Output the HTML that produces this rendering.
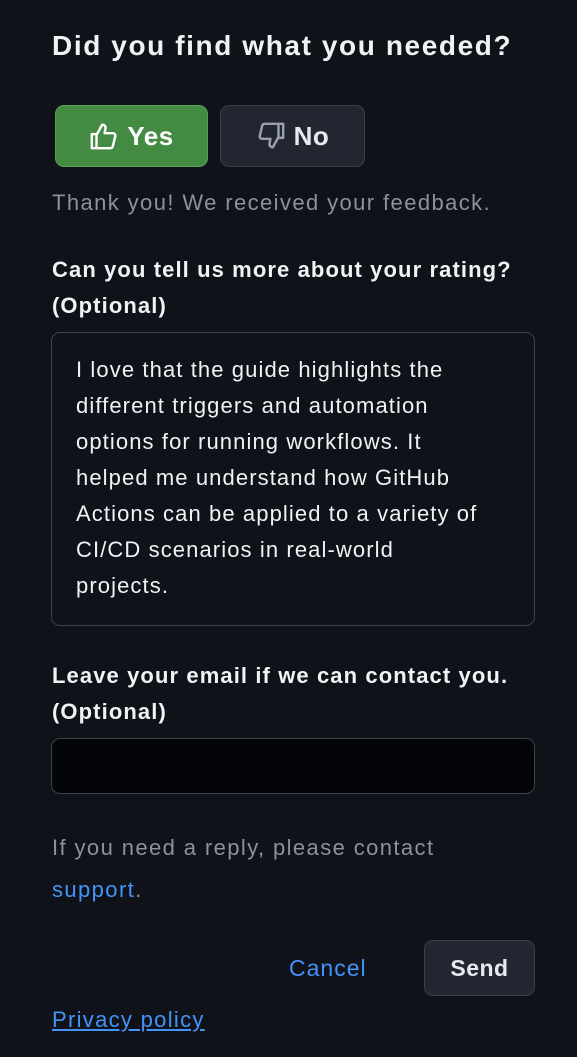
<!DOCTYPE html>
<html><head><meta charset="utf-8"><style>
*{box-sizing:border-box;margin:0;padding:0}
body{width:577px;height:1057px;background:#0f1218;font-family:"Liberation Sans",sans-serif;color:#f0f3f6;position:relative;overflow:hidden}
.a{position:absolute;white-space:nowrap}
h1{position:absolute;left:52px;top:30px;font-size:28px;letter-spacing:1.6px;font-weight:bold;color:#f0f3f6;white-space:nowrap}
.btn{position:absolute;top:105px;height:62px;border-radius:9px;font-size:26px;letter-spacing:0.5px;font-weight:bold;display:flex;align-items:center;justify-content:center;gap:8px}
.yes{left:55px;width:153px;background:#438a42;border:1.5px solid #56a055;color:#fff}
.no{left:220px;width:145px;background:#212630;border:1.5px solid #3a404a;color:#e6e9ee}
.muted{color:#8a929c;font-size:22px;letter-spacing:1.4px}
.lbl{font-size:22px;letter-spacing:1.1px;font-weight:bold;line-height:36px;color:#f0f3f6}
.ta{left:51px;top:332px;width:484px;height:294px;border:1.5px solid #3c424b;border-radius:9px;background:#0f1218;padding:19px 24px;font-size:22px;letter-spacing:1.1px;line-height:36px;color:#f0f3f6;white-space:nowrap}
.in{left:51px;top:738px;width:484px;height:56px;border:1.5px solid #3c424b;border-radius:9px;background:#020408}
a{color:#4493f8;text-decoration:none}
</style></head><body>
<h1>Did you find what you needed?</h1>
<div class="btn yes"><svg width="30" height="30" viewBox="0 0 16 16" fill="none" stroke="#fff" stroke-width="1.3" stroke-linejoin="round"><path d="M1.5 7h2.5v7.5h-2.5zM4 7.5l3-5.5c1.2 0 2 .8 1.8 2L8.3 6.5h4.5c.8 0 1.4.8 1.2 1.6l-1.3 5.4c-.2.6-.7 1-1.3 1H4"/></svg>Yes</div>
<div class="btn no"><svg width="30" height="30" viewBox="0 0 16 16" fill="none" stroke="#9aa1aa" stroke-width="1.3" stroke-linejoin="round"><path d="M14.5 9h-2.5V1.5h2.5zM12 8.5l-3 5.5c-1.2 0-2-.8-1.8-2l.5-2.5H3.2c-.8 0-1.4-.8-1.2-1.6l1.3-5.4c.2-.6.7-1 1.3-1H12"/></svg>No</div>
<div class="a muted" style="left:52px;top:190px">Thank you! We received your feedback.</div>
<div class="a lbl" style="left:52px;top:252px">Can you tell us more about your rating?<br>(Optional)</div>
<div class="a ta">I love that the guide highlights the<br>different triggers and automation<br>options for running workflows. It<br>helped me understand how GitHub<br>Actions can be applied to a variety of<br>CI/CD scenarios in real-world<br>projects.</div>
<div class="a lbl" style="left:52px;top:658px">Leave your email if we can contact you.<br>(Optional)</div>
<div class="a in"></div>
<div class="a muted" style="left:52px;top:827px;line-height:42px">If you need a reply, please contact<br><a>support</a>.</div>
<div class="a" style="left:289px;top:955px;font-size:23px;letter-spacing:1px;color:#4493f8">Cancel</div>
<div class="a" style="left:424px;top:940px;width:111px;height:56px;border-radius:9px;background:#212630;border:1.5px solid #3a404a;font-size:23px;letter-spacing:0.5px;font-weight:bold;display:flex;align-items:center;justify-content:center;color:#e6e9ee">Send</div>
<div class="a" style="left:52px;top:1007px;font-size:22px;letter-spacing:1.3px"><a style="text-decoration:underline">Privacy policy</a></div>
</body></html>
